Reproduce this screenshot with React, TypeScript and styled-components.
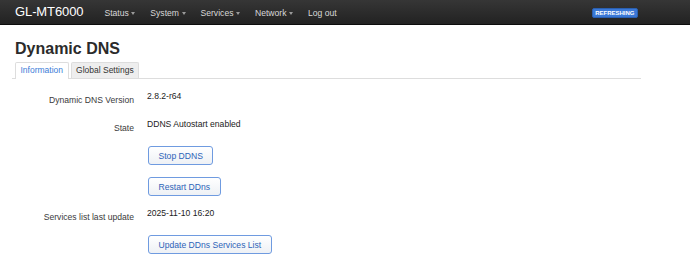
import React from "react";
import styled, { createGlobalStyle } from "styled-components";

const GlobalStyle = createGlobalStyle`
  body {
    margin: 0;
    background: #fff;
    font-family: "Liberation Sans", Arial, sans-serif;
    color: #333;
  }
`;

const Header = styled.header`
  height: 24px;
  background: linear-gradient(to bottom, #363636, #222);
  border-bottom: 1px solid #0c0c0c;
`;

const HeaderInner = styled.div`
  box-sizing: border-box;
  width: 629px;
  height: 24px;
  margin-left: 12px;
  padding: 0 3px;
  display: flex;
  align-items: center;
`;

const Brand = styled.a`
  color: #fff;
  font-size: 13px;
  line-height: 24px;
  margin-right: 13.5px;
  letter-spacing: -0.1px;
`;

const NavList = styled.ul`
  list-style: none;
  margin: 0;
  padding: 0;
  display: flex;
`;

const NavLink = styled.li`
  color: #d8d8d8;
  font-size: 8.6px;
  line-height: 24px;
  padding: 1px 7.5px 0;
  display: flex;
  align-items: center;
`;

const Caret = styled.span`
  width: 0;
  height: 0;
  margin-left: 2.5px;
  margin-top: 1px;
  border-top: 3px solid #9a9a9a;
  border-left: 2.5px solid transparent;
  border-right: 2.5px solid transparent;
`;

const Badge = styled.span`
  margin-left: auto;
  background: #3a78d6;
  border: 1px solid #2a5fb0;
  border-radius: 2px;
  color: #fff;
  font-size: 6px;
  font-weight: bold;
  line-height: 8px;
  padding: 0 2.5px;
  margin-top: 1px;
`;

const Main = styled.main`
  width: 629px;
  margin-left: 12px;
`;

const Title = styled.h2`
  margin: 15px 0 0;
  padding-left: 3px;
  font-size: 16px;
  line-height: 18px;
  font-weight: bold;
  color: #2b2b2b;
`;

const Tabs = styled.ul`
  list-style: none;
  margin: 4px 0 0;
  padding: 0 0 0 3px;
  display: flex;
  gap: 2px;
  border-bottom: 1px solid #ddd;
`;

const Tab = styled.li<{ active?: boolean }>`
  font-size: 8.5px;
  line-height: 15px;
  padding: 0 4.5px;
  border: 1px solid #ddd;
  border-bottom: none;
  border-radius: 2px 2px 0 0;
  margin-bottom: ${p => (p.active ? "-1px" : "0")};
  padding-bottom: ${p => (p.active ? "1px" : "0")};
  background: ${p => (p.active ? "#fff" : "#eee")};
  color: ${p => (p.active ? "#3b7dd8" : "#333")};
`;

const Section = styled.div`
  padding-top: 11px;
`;

const Row = styled.div<{ gapBelow: number }>`
  display: grid;
  grid-template-columns: 122px 1fr;
  column-gap: 13px;
  align-items: start;
  margin-bottom: ${p => p.gapBelow + "px"};
`;

const Label = styled.div`
  text-align: right;
  font-size: 8.6px;
  line-height: 13px;
  padding-top: 4px;
  color: #3a3a3a;
`;

const Value = styled.div`
  font-size: 8.6px;
  line-height: 13px;
  color: #222;
`;

const Button = styled.button`
  box-sizing: border-box;
  height: 19px;
  margin-left: 1px;
  padding: 0 9.5px;
  font-family: "Liberation Sans", Arial, sans-serif;
  font-size: 8.6px;
  color: #2d63b8;
  background: linear-gradient(to bottom, #fff, #eef1f5);
  border: 1px solid #6f9be0;
  border-radius: 3px;
  cursor: pointer;
`;

const navItems = ["Status", "System", "Services", "Network"];

export default function App() {
  return (
    <>
      <GlobalStyle />
      <Header>
        <HeaderInner>
          <Brand>GL-MT6000</Brand>
          <NavList>
            {navItems.map(item => (
              <NavLink key={item}>
                {item}
                <Caret />
              </NavLink>
            ))}
            <NavLink>Log out</NavLink>
          </NavList>
          <Badge>REFRESHING</Badge>
        </HeaderInner>
      </Header>
      <Main>
        <Title>Dynamic DNS</Title>
        <Tabs>
          <Tab active>Information</Tab>
          <Tab>Global Settings</Tab>
        </Tabs>
        <Section>
          <Row gapBelow={11}>
            <Label>Dynamic DNS Version</Label>
            <Value>2.8.2-r64</Value>
          </Row>
          <Row gapBelow={11}>
            <Label>State</Label>
            <Value>DDNS Autostart enabled</Value>
          </Row>
          <Row gapBelow={12}>
            <div />
            <Value>
              <Button>Stop DDNS</Button>
            </Value>
          </Row>
          <Row gapBelow={11}>
            <div />
            <Value>
              <Button>Restart DDns</Button>
            </Value>
          </Row>
          <Row gapBelow={11}>
            <Label>Services list last update</Label>
            <Value>2025-11-10 16:20</Value>
          </Row>
          <Row gapBelow={0}>
            <div />
            <Value>
              <Button>Update DDns Services List</Button>
            </Value>
          </Row>
        </Section>
      </Main>
    </>
  );
}
